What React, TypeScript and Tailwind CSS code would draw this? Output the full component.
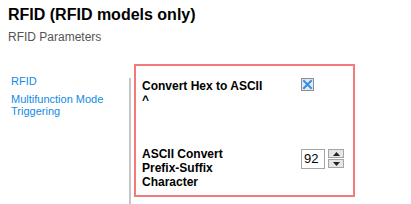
function CheckMark() {
  return (
    <div className="w-[13px] h-[13px] border border-[#8f8f8f] bg-[#dfe9f5] flex items-center justify-center">
      <svg width="11" height="11" viewBox="0 0 11 11">
        <path d="M2 2 L9 9 M9 2 L2 9" stroke="#3a8fd8" strokeWidth="2" strokeLinecap="square" />
      </svg>
    </div>
  );
}

function Spinner({ value }: { value: number }) {
  return (
    <div className="flex items-start gap-[2px] font-normal">
      <div className="w-[24px] h-[20px] border border-[#a5a5a5] bg-white pl-[2px] text-[13px] leading-[18px] text-black">
        {value}
      </div>
      <div className="flex flex-col gap-[1px] mx-[1px]">
        {[0, 1].map(i => (
          <div
            key={i}
            className="w-[16px] h-[9px] border border-[#a5a5a5] bg-[#e6e6e6] flex items-center justify-center"
          >
            <svg width="7" height="4" viewBox="0 0 7 4">
              <path d={i === 0 ? 'M0 4 L3.5 0 L7 4 Z' : 'M0 0 L3.5 4 L7 0 Z'} fill="#222" />
            </svg>
          </div>
        ))}
      </div>
    </div>
  );
}

export default function App() {
  return (
    <div
      className="w-[411px] h-[204px] bg-white overflow-hidden flex flex-col"
      style={{ fontFamily: '"Liberation Sans", Arial, sans-serif' }}
    >
      {/* Header */}
      <div className="pl-[8px] pt-[5px]">
        <h1 className="text-[16px] leading-[20px] font-bold text-black">RFID (RFID models only)</h1>
        <p className="mt-[4px] text-[12px] leading-[16px] text-[#555555]">RFID Parameters</p>
      </div>

      <div className="flex flex-1 mt-[19px]">
        {/* Side nav */}
        <div className="w-[129px] pl-[11px] pt-[11px] text-[11px] leading-[12px] text-[#138ae6]">
          <div>RFID</div>
          <div className="mt-[6px]">
            Multifunction Mode
            <br />
            Triggering
          </div>
        </div>
        <div className="w-[2px] mt-[14px] bg-[#c6c6c6]" />

        {/* Parameter panel */}
        <div className="ml-[3px] w-[221px] h-[133px] border-2 border-[#f47a7a] pt-[13px] pl-[6px] text-[12px] leading-[14px] font-bold text-black">
          <div className="flex items-start">
            <div className="w-[159px]">
              Convert Hex to ASCII
              <br />^
            </div>
            <div className="-mt-[1px]">
              <CheckMark />
            </div>
          </div>
          <div className="flex items-start mt-[40px]">
            <div className="w-[159px]">
              ASCII Convert
              <br />
              Prefix-Suffix
              <br />
              Character
            </div>
            <div className="mt-[2px]">
              <Spinner value={92} />
            </div>
          </div>
        </div>
      </div>
    </div>
  );
}
